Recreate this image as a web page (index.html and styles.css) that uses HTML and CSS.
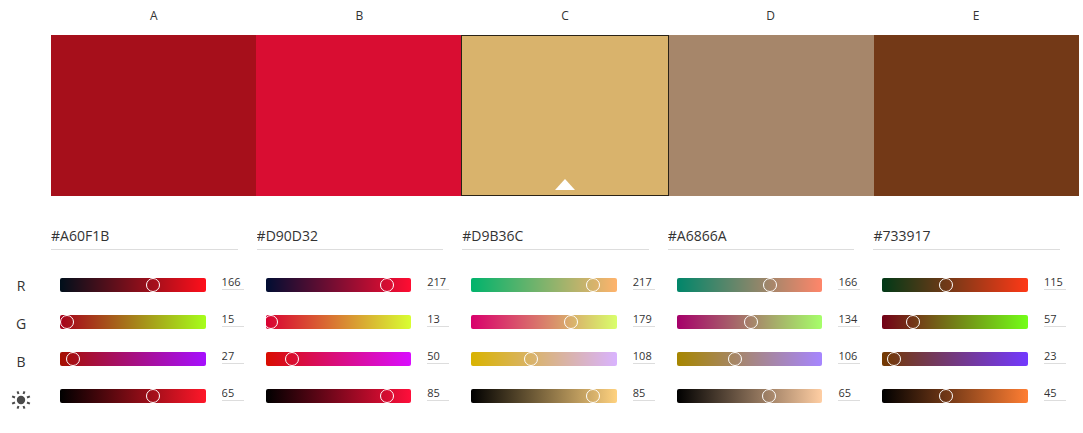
FILE: index.html
```html
<!DOCTYPE html>
<html lang="en">
<head>
<meta charset="utf-8">
<meta name="viewport" content="width=device-width, initial-scale=1">
<title>Color palette</title>
<link rel="stylesheet" href="styles.css">
</head>
<body>
<main class="palette">
  <div class="letters">
    <span>A</span><span>B</span><span>C</span><span>D</span><span>E</span>
  </div>

  <div class="swatches">
    <button class="swatch" type="button" aria-label="Color A" style="background:#A60F1B"></button>
    <button class="swatch" type="button" aria-label="Color B" style="background:#D90D32"></button>
    <button class="swatch swatch-active" type="button" aria-label="Color C" aria-pressed="true" style="background:#D9B36C">
      <svg class="marker" viewBox="0 0 20 11" aria-hidden="true"><path d="M10 0 20 11H0z"/></svg>
    </button>
    <button class="swatch" type="button" aria-label="Color D" style="background:#A6866A"></button>
    <button class="swatch" type="button" aria-label="Color E" style="background:#733917"></button>
  </div>

  <div class="channels">
    <span>R</span>
    <span>G</span>
    <span>B</span>
    <svg class="sun" viewBox="-10 -10 20 20" role="img" aria-label="Brightness">
      <circle r="4.2"/>
      <path d="M2.5 -6 3.5 -8.7M6 -2.5 8.9 -3.7M6 2.5 8.9 3.7M2.5 6 3.5 8.7M-2.5 6 -3.5 8.7M-6 2.5 -8.9 3.7M-6 -2.5 -8.9 -3.7M-2.5 -6 -3.5 -8.7"/>
    </svg>
  </div>

  <div class="editors">
    <section class="editor">
      <input class="hex" type="text" aria-label="Hex A" value="#A60F1B">
      <div class="sliders">
        <div class="track" style="--from:rgb(0,15,27);--to:rgb(255,15,27)"><input type="range" aria-label="A red" max="255" value="166"></div><input class="value" type="text" aria-label="A red value" value="166">
        <div class="track" style="--from:rgb(166,0,27);--to:rgb(166,255,27)"><input type="range" aria-label="A green" max="255" value="15"></div><input class="value" type="text" aria-label="A green value" value="15">
        <div class="track" style="--from:rgb(166,15,0);--to:rgb(166,15,255)"><input type="range" aria-label="A blue" max="255" value="27"></div><input class="value" type="text" aria-label="A blue value" value="27">
        <div class="track" style="--from:#000;--to:rgb(255,23,41)"><input type="range" aria-label="A brightness" max="100" value="65"></div><input class="value" type="text" aria-label="A brightness value" value="65">
      </div>
    </section>

    <section class="editor">
      <input class="hex" type="text" aria-label="Hex B" value="#D90D32">
      <div class="sliders">
        <div class="track" style="--from:rgb(0,13,50);--to:rgb(255,13,50)"><input type="range" aria-label="B red" max="255" value="217"></div><input class="value" type="text" aria-label="B red value" value="217">
        <div class="track" style="--from:rgb(217,0,50);--to:rgb(217,255,50)"><input type="range" aria-label="B green" max="255" value="13"></div><input class="value" type="text" aria-label="B green value" value="13">
        <div class="track" style="--from:rgb(217,13,0);--to:rgb(217,13,255)"><input type="range" aria-label="B blue" max="255" value="50"></div><input class="value" type="text" aria-label="B blue value" value="50">
        <div class="track" style="--from:#000;--to:rgb(255,15,59)"><input type="range" aria-label="B brightness" max="100" value="85"></div><input class="value" type="text" aria-label="B brightness value" value="85">
      </div>
    </section>

    <section class="editor">
      <input class="hex" type="text" aria-label="Hex C" value="#D9B36C">
      <div class="sliders">
        <div class="track" style="--from:rgb(0,179,108);--to:rgb(255,179,108)"><input type="range" aria-label="C red" max="255" value="217"></div><input class="value" type="text" aria-label="C red value" value="217">
        <div class="track" style="--from:rgb(217,0,108);--to:rgb(217,255,108)"><input type="range" aria-label="C green" max="255" value="179"></div><input class="value" type="text" aria-label="C green value" value="179">
        <div class="track" style="--from:rgb(217,179,0);--to:rgb(217,179,255)"><input type="range" aria-label="C blue" max="255" value="108"></div><input class="value" type="text" aria-label="C blue value" value="108">
        <div class="track" style="--from:#000;--to:rgb(255,210,127)"><input type="range" aria-label="C brightness" max="100" value="85"></div><input class="value" type="text" aria-label="C brightness value" value="85">
      </div>
    </section>

    <section class="editor">
      <input class="hex" type="text" aria-label="Hex D" value="#A6866A">
      <div class="sliders">
        <div class="track" style="--from:rgb(0,134,106);--to:rgb(255,134,106)"><input type="range" aria-label="D red" max="255" value="166"></div><input class="value" type="text" aria-label="D red value" value="166">
        <div class="track" style="--from:rgb(166,0,106);--to:rgb(166,255,106)"><input type="range" aria-label="D green" max="255" value="134"></div><input class="value" type="text" aria-label="D green value" value="134">
        <div class="track" style="--from:rgb(166,134,0);--to:rgb(166,134,255)"><input type="range" aria-label="D blue" max="255" value="106"></div><input class="value" type="text" aria-label="D blue value" value="106">
        <div class="track" style="--from:#000;--to:rgb(255,206,163)"><input type="range" aria-label="D brightness" max="100" value="65"></div><input class="value" type="text" aria-label="D brightness value" value="65">
      </div>
    </section>

    <section class="editor">
      <input class="hex" type="text" aria-label="Hex E" value="#733917">
      <div class="sliders">
        <div class="track" style="--from:rgb(0,57,23);--to:rgb(255,57,23)"><input type="range" aria-label="E red" max="255" value="115"></div><input class="value" type="text" aria-label="E red value" value="115">
        <div class="track" style="--from:rgb(115,0,23);--to:rgb(115,255,23)"><input type="range" aria-label="E green" max="255" value="57"></div><input class="value" type="text" aria-label="E green value" value="57">
        <div class="track" style="--from:rgb(115,57,0);--to:rgb(115,57,255)"><input type="range" aria-label="E blue" max="255" value="23"></div><input class="value" type="text" aria-label="E blue value" value="23">
        <div class="track" style="--from:#000;--to:rgb(255,126,51)"><input type="range" aria-label="E brightness" max="100" value="45"></div><input class="value" type="text" aria-label="E brightness value" value="45">
      </div>
    </section>
  </div>
</main>
</body>
</html>
```

FILE: styles.css
```css
* {
  box-sizing: border-box;
}

body {
  margin: 0;
  background: #fff;
  color: #333;
  font-family: "Open Sans", "Noto Sans", sans-serif;
}

button,
input {
  margin: 0;
  padding: 0;
  border: 0;
  border-radius: 0;
  background: none;
  color: inherit;
  font: inherit;
}

.palette {
  display: grid;
  grid-template-columns: 42px 1fr;
  column-gap: 9px;
  padding: 5px 4px 16px 0;
}

.letters {
  grid-column: 2;
  display: grid;
  grid-template-columns: repeat(5, 1fr);
  height: 30px;
  font-size: 12px;
  line-height: 22px;
  text-align: center;
}

.swatches {
  grid-column: 2;
  display: flex;
  height: 161px;
}

.swatch {
  flex: 1 1 0;
  cursor: pointer;
}

.swatch-active {
  display: flex;
  align-items: flex-end;
  justify-content: center;
  box-sizing: content-box;
  border: 1px solid #2b2316;
}

.marker {
  width: 20px;
  height: 11px;
  margin-bottom: 5px;
  fill: #fff;
}

.channels {
  display: grid;
  grid-auto-rows: 38px;
  align-items: center;
  justify-items: center;
  padding-top: 71px;
  font-size: 14px;
  line-height: 18px;
}

.sun {
  width: 20px;
  height: 20px;
  fill: #4a4a4a;
  stroke: #4a4a4a;
  stroke-width: 0;
}

.sun path {
  stroke-width: 2;
}

.editors {
  display: grid;
  grid-template-columns: repeat(5, 1fr);
  padding-top: 28px;
}

.editor {
  padding-right: 13px;
  min-width: 0;
}

.hex {
  display: block;
  width: calc(100% - 6px);
  height: 26px;
  padding-bottom: 2px;
  border-bottom: 1px solid #ddd;
  font-size: 14px;
  line-height: 20px;
}

.sliders {
  display: grid;
  grid-template-columns: 1fr 22px;
  grid-auto-rows: 16px;
  column-gap: 16px;
  row-gap: 21px;
  align-items: end;
  padding: 26px 0 0 9px;
}

.track {
  height: 14px;
  overflow: hidden;
  border-radius: 2px;
  background: linear-gradient(to right, var(--from), var(--to));
}

/* The thumb's centre travels the full track width and may be clipped at its ends. */
.track input {
  display: block;
  width: calc(100% + 14px);
  height: 14px;
  margin-left: -9px;
  appearance: none;
  cursor: pointer;
}

.track input::-webkit-slider-thumb {
  appearance: none;
  width: 14px;
  height: 14px;
  border: 1px solid #fff;
  border-radius: 50%;
  background: transparent;
}

.value {
  align-self: start;
  width: 100%;
  height: 14px;
  padding-bottom: 2px;
  border-bottom: 1px solid #ddd;
  font-size: 11px;
  line-height: 11px;
}
```
